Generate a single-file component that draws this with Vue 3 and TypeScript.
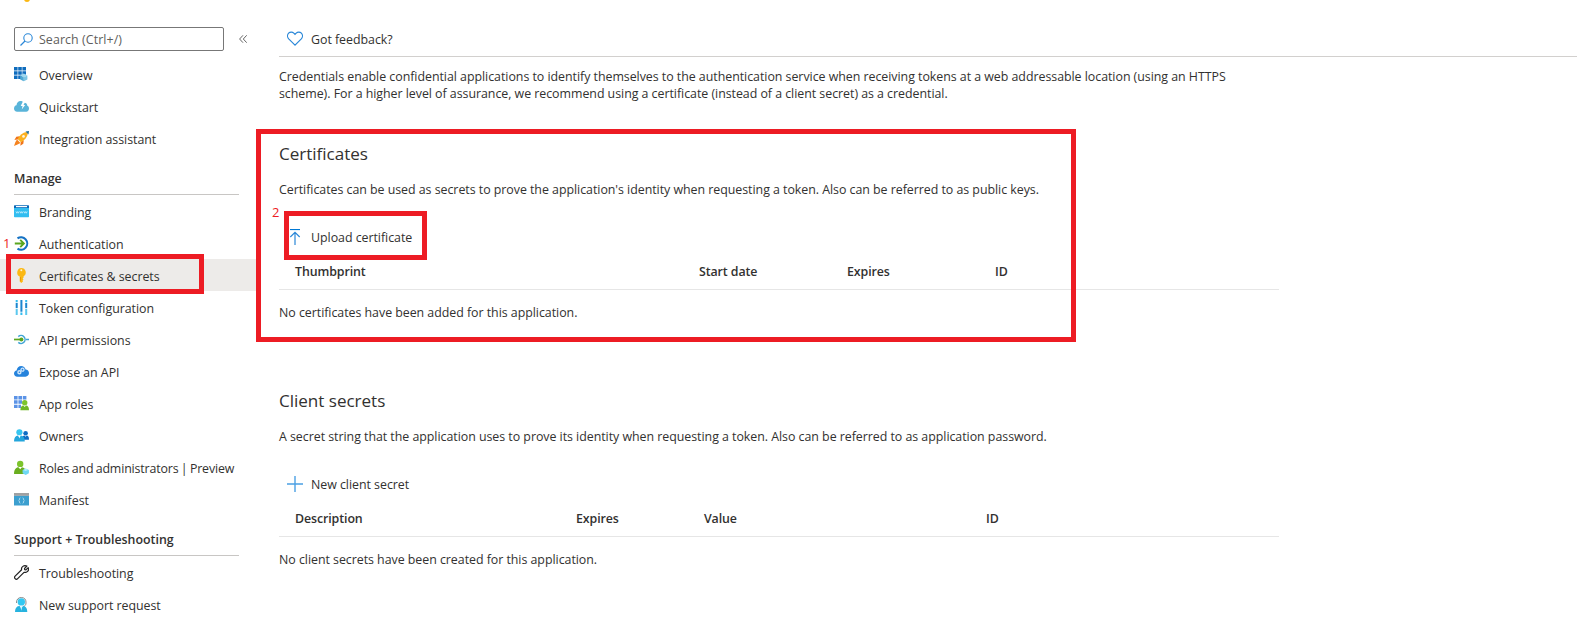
<script setup lang="ts">
import { ref } from 'vue';

interface MenuItem {
  label: string;
  icon: string;
}

interface MenuGroup {
  title?: string;
  items: MenuItem[];
}

const search = ref('');
const selected = ref('Certificates & secrets');

const menu: MenuGroup[] = [
  {
    items: [
      { label: 'Overview', icon: 'overview' },
      { label: 'Quickstart', icon: 'quickstart' },
      { label: 'Integration assistant', icon: 'rocket' },
    ],
  },
  {
    title: 'Manage',
    items: [
      { label: 'Branding', icon: 'branding' },
      { label: 'Authentication', icon: 'auth' },
      { label: 'Certificates & secrets', icon: 'key' },
      { label: 'Token configuration', icon: 'token' },
      { label: 'API permissions', icon: 'permissions' },
      { label: 'Expose an API', icon: 'cloud' },
      { label: 'App roles', icon: 'roles' },
      { label: 'Owners', icon: 'owners' },
      { label: 'Roles and administrators | Preview', icon: 'admin' },
      { label: 'Manifest', icon: 'manifest' },
    ],
  },
  {
    title: 'Support + Troubleshooting',
    items: [
      { label: 'Troubleshooting', icon: 'wrench' },
      { label: 'New support request', icon: 'support' },
    ],
  },
];

// all drawn on a 15x15 grid
const icons: Record<string, string> = {
  overview: `
    <path fill="#0f6cbd" d="M0 0h3.6v3.6H0zM4.2 0h3.6v3.6H4.2zM8.4 0H12v3.6H8.4zM0 4.2h3.6v3.6H0zM4.2 4.2h3.6v3.6H4.2zM8.4 4.2H12v3.6H8.4zM0 8.4h3.6V12H0zM4.2 8.4h3.6V12H4.2z"/>
    <path fill="#9fd8ef" d="M9.8 6.6l3.6 1.8-3.6 1.9-3.6-1.9z"/>
    <path fill="#4fa9d3" d="M6.2 8.4l3.6 1.9v4L6.2 12.4z"/>
    <path fill="#7cc5e4" d="M13.4 8.4l-3.6 1.9v4l3.6-1.9z"/>`,
  quickstart: `
    <path fill="#59b4d9" d="M3.2 12.8C1.2 12.8 0 11.500 0 9.600 0 7.800 1 6.400 2.500 6.200 2.700 3.800 4.300 2.100 6.500 2.100c1.500 0 2.500.6 3.200 1.700 2.100-.3 3.600 1 3.600 3 1.100.3 1.700 1.300 1.700 2.700 0 1.900-1.200 3.300-2.800 3.300z"/>
    <path fill="#fff" d="M8.900 2.600L6.700 7h1.900L7.700 10.600 11.200 5.900H9.500l1.500-2.700z"/>`,
  rocket: `
    <path fill="#f0741a" d="M5.800 5.200L2.300 5.800.4 9l4-.7zM9.800 9.200L9.300 12.700l-3 2 .5-3.900z"/>
    <path fill="#f5831f" d="M3 8.500l3.500 3.500-2.500 1.200L0 15l1.300-3.700z"/>
    <path fill="#fbb01f" d="M12.400 1.100l1.500 1.500c-.6 3.700-3.200 6.600-6.900 8.700L3.700 8C5.800 4.200 8.700 1.800 12.400 1.100z"/>
    <path fill="#1f6f9f" d="M15 0l-.5 3.500-3-3z"/>
    <circle cx="9.500" cy="5.400" r="1.300" fill="#fff6dd"/>`,
  branding: `
    <path fill="#32bdf0" d="M0 4h15v8.500a.7.7 0 0 1-.7.700H.700a.7.7 0 0 1-.7-.7z"/>
    <path fill="#0a68b8" d="M.6 1.200h13.800a.6.6 0 0 1 .6.600V4H0V1.800a.6.6 0 0 1 .6-.6z"/>
    <path fill="#fff" d="M2 2h11v1.200H2z"/>
    <path fill="none" stroke="#d5f3fd" stroke-width=".7" d="M2 7.400l.8 1.800.8-1.600.8 1.600.8-1.800M6 7.400l.8 1.800.8-1.600.8 1.600.8-1.800M10 7.400l.8 1.800.8-1.600.8 1.600.8-1.800"/>`,
  auth: `
    <path fill="none" stroke="#1572c4" stroke-width="2.100" d="M3.500 2.400A6.200 6.200 0 1 1 3.500 12.600"/>
    <path fill="none" stroke="#5aa61f" stroke-width="1.900" d="M.8 7.500h8.400M6.200 3.800l3.700 3.700-3.700 3.700"/>`,
  key: `
    <path fill="#fbb813" d="M7.300 0a4.500 4.500 0 0 1 2.200 8.400v1.300l-.9.900.9.900-.9 1 .4.900L7.300 15l-1.600-1.600V8.500A4.500 4.500 0 0 1 7.300 0z"/>
    <circle cx="7.300" cy="2.200" r="1" fill="#fff3cf"/>
    <path fill="#e79206" d="M6.200 9h.8v4.200l-.8-.7z"/>`,
  token: `
    <path fill="#32bdf0" d="M1.700 0h2v2.200h-2zM11.200 0h2v2.200h-2zM6.400 12.600h2V15h-2z"/>
    <path fill="#1b86cf" d="M1.700 3h2v5h-2zM11.200 3h2v5h-2zM6.400 0h2v11.700h-2z"/>
    <path fill="#5bc8ee" d="M1.700 8.700h2V15h-2zM11.200 8.700h2V15h-2z"/>`,
  permissions: `
    <path fill="none" stroke="#3fa4d4" stroke-width="1.500" d="M4.300 4.600a4 4 0 1 1 0 5.800M12 7.500h3"/>
    <path stroke="#5aa61f" stroke-width="1.700" d="M0 7.500h7"/>
    <circle cx="7.400" cy="7.500" r="2" fill="#5aa61f"/>`,
  cloud: `
    <path fill="#2583dc" d="M3.300 12.700C1.400 12.700 0 11.300 0 9.500c0-1.600 1.100-2.900 2.600-3.100C2.900 3.900 4.800 2 7.200 2c2.200 0 3.800 1.300 4.400 3.500 2 .2 3.400 1.600 3.400 3.600 0 2.100-1.500 3.600-3.500 3.600z"/>
    <circle cx="8.500" cy="5.700" r="1.500" fill="none" stroke="#cfe6fb" stroke-width="1.300"/>
    <circle cx="5.400" cy="8.300" r="1.500" fill="none" stroke="#cfe6fb" stroke-width="1.400"/>`,
  roles: `
    <path fill="#5b93e6" d="M0 0h3.600v3.400H0zM4.400 0H8v3.400H4.400zM8.800 0h3.600v3.400H8.800zM0 4.300h3.600v3.500H0zM4.400 4.300H8v3.500H4.400zM0 8.700h3.600v3.400H0zM4.400 8.700H7v3.400H4.400z"/>
    <circle cx="10.700" cy="6.700" r="2.700" fill="#7cc42c"/>
    <path fill="#6fb824" d="M6.400 14.200c0-3 1.200-4.600 3-4.600l1.300 1.500L12 9.600c1.800 0 3 1.600 3 4.600z"/>`,
  owners: `
    <circle cx="11.600" cy="5.200" r="2.300" fill="#0c6cc4"/>
    <path fill="#0c6cc4" d="M8 11.800c0-2.800 1-4.200 2.600-4.200l1 1.200 1-1.200c1.500 0 2.400 1.400 2.400 3.600 0 .4-.2.600-.6.600z"/>
    <circle cx="5.400" cy="4.300" r="3.100" fill="#37c5f0"/>
    <path fill="#24a6dc" d="M.6 13.600a.6.600 0 0 1-.6-.6c.2-3.400 1.600-5.500 3.900-5.500l1.500 2 1.500-2c2.300 0 3.600 2.100 3.900 5.500 0 .4-.2.600-.6.600z"/>
    <path fill="#fff" d="M4.400 7.500h2l-1 3z"/>`,
  admin: `
    <circle cx="6.200" cy="3.900" r="3.200" fill="#7cc42c"/>
    <path fill="#6aae20" d="M.6 14A.6.600 0 0 1 0 13.400C.3 9.600 1.900 7.300 4.500 7.300l1.700 2 1.700-2c2.500 0 3.900 2 4.200 6.100 0 .4-.2.600-.6.600z"/>
    <path fill="#6fd8f5" d="M11.700 8.400l3.200 1.500v3.400l-3.200 1.700-3.100-1.700V9.900z"/>
    <path fill="#b9eefb" d="M11.700 8.800l2.300 1.100-2.300 1.200-2.300-1.200z"/>`,
  manifest: `
    <path fill="#3c9fcf" d="M0 3.500h15v10H0z"/>
    <path fill="#a0a1a2" d="M0 1h15v2.800H0z"/>
    <path fill="none" stroke="#b5deF0" stroke-width=".9" d="M6.300 5.800c-1.300 0-.3 2.600-1.600 2.800 1.300.2.300 2.800 1.600 2.800M8.700 5.800c1.300 0 .3 2.600 1.600 2.800-1.300.2-.3 2.800-1.600 2.800"/>`,
  wrench: `
    <path fill="none" stroke="#222" stroke-width="1.200" stroke-linejoin="round" d="M12.900 1.100L10.500 3.500l.2 1.200 1.200.2 2.300-2.300c.7 2-.2 4-1.900 4.600-.8.300-1.600.3-2.300.100l-6.300 6.400a1.800 1.800 0 0 1-2.600-2.600l6.500-6.300C6.900 2.100 9.900-.4 12.900 1.100z"/>`,
  support: `
    <path fill="none" stroke="#8a8a8a" stroke-width="1" d="M2.500 6C2.300 2.600 4.200.5 7.300.5s5 2.100 4.700 5.500c-.1 2-.8 3-2.600 3.300"/>
    <circle cx="7.300" cy="4.900" r="3.700" fill="#32c8f2"/>
    <path fill="#27b3df" d="M1.600 15a.6.600 0 0 1-.6-.6c.3-3.300 1.800-5.300 4.600-5.300l1.700 2.200 1.700-2.200c2.700 0 4 2 4.300 5.300 0 .4-.2.600-.6.600z"/>
    <path fill="#d7f5fd" d="M6.300 9.200h2l-1 4.500z"/>`,
};
</script>

<template>
  <div class="portal">
    <aside class="sidebar">
      <span class="blade-key"></span>
      <div class="search-row">
        <label class="search">
          <svg width="13" height="13" viewBox="0 0 13 13">
            <circle cx="8" cy="5" r="4.200" fill="none" stroke="#2b88d8" stroke-width="1.100" />
            <path d="M5 8L.5 12.500" stroke="#2b88d8" stroke-width="1.200" />
          </svg>
          <input v-model="search" type="text" placeholder="Search (Ctrl+/)" />
        </label>
        <svg class="collapse" width="8" height="8" viewBox="0 0 8 8">
          <path d="M4 .3L.6 4 4 7.700M7.700.3L4.300 4l3.400 3.700" fill="none" stroke="#555" stroke-width=".9" />
        </svg>
      </div>

      <nav v-for="(group, i) in menu" :key="i" class="group">
        <h3 v-if="group.title" class="group-title">{{ group.title }}</h3>
        <a
          v-for="item in group.items"
          :key="item.label"
          class="item"
          :class="{ active: item.label === selected, long: item.label.length > 30 }"
          @click="selected = item.label"
        >
          <svg width="15" height="15" viewBox="0 0 15 15" v-html="icons[item.icon]"></svg>
          <span>{{ item.label }}</span>
        </a>
      </nav>

      <span class="step step-one">1</span>
      <div class="mark mark-menu"></div>
    </aside>

    <main class="content">
      <div class="toolbar">
        <svg width="16" height="17" viewBox="0 0 16 17">
          <path d="M8 14.200L1.700 7.800C.2 6.200.2 3.700 1.600 2.200c1.500-1.500 3.800-1.500 5.200-.1L8 3.300l1.200-1.200c1.400-1.400 3.700-1.400 5.200.1 1.400 1.500 1.400 4-.1 5.600z" fill="none" stroke="#2b88d8" stroke-width="1.200" />
        </svg>
        <span>Got feedback?</span>
      </div>

      <p class="intro">
        Credentials enable confidential applications to identify themselves to the authentication service when receiving tokens at a web addressable location (using an HTTPS<br>
        scheme). For a higher level of assurance, we recommend using a certificate (instead of a client secret) as a credential.
      </p>

      <section class="panel">
        <h2>Certificates</h2>
        <p class="about">Certificates can be used as secrets to prove the application's identity when requesting a token. Also can be referred to as public keys.</p>
        <div class="command">
          <svg width="16" height="16" viewBox="0 0 16 16">
            <path d="M3 .5h10" stroke="#0078d4" stroke-width="1.200" />
            <path d="M8 16V3.200M3.300 8L8 3.300 12.700 8" fill="none" stroke="#2b88d8" stroke-width="1.200" />
          </svg>
          <span>Upload certificate</span>
        </div>
        <div class="head head-certs">
          <span>Thumbprint</span>
          <span>Start date</span>
          <span>Expires</span>
          <span>ID</span>
        </div>
        <p class="empty">No certificates have been added for this application.</p>
        <span class="step step-two">2</span>
        <div class="mark mark-section"></div>
        <div class="mark mark-upload"></div>
      </section>

      <section class="panel">
        <h2>Client secrets</h2>
        <p class="about">A secret string that the application uses to prove its identity when requesting a token. Also can be referred to as application password.</p>
        <div class="command">
          <svg width="16" height="16" viewBox="0 0 16 16">
            <path d="M8 0v16M0 8h16" stroke="#4ba0e4" stroke-width="1.400" />
          </svg>
          <span>New client secret</span>
        </div>
        <div class="head head-secrets">
          <span>Description</span>
          <span>Expires</span>
          <span>Value</span>
          <span>ID</span>
        </div>
        <p class="empty">No client secrets have been created for this application.</p>
      </section>
    </main>
  </div>
</template>

<style>
body {
  margin: 0;
  background: #fff;
}
</style>

<style scoped>
.portal {
  display: flex;
  height: 640px;
  overflow: hidden;
  font-family: "Open Sans", "Noto Sans", sans-serif;
  font-size: 12.4px;
  letter-spacing: -0.035px;
  color: #323130;
}

h2,
h3,
p {
  margin: 0;
}

/* sidebar */
.sidebar {
  position: relative;
  width: 256px;
  flex: none;
}

.blade-key {
  position: absolute;
  top: -4px;
  left: 24px;
  width: 6px;
  height: 6px;
  border-radius: 50%;
  background: #fbb813;
}

.search-row {
  display: flex;
  align-items: center;
  gap: 15px;
  height: 24px;
  padding: 27px 0 7px 14px;
}

.search {
  display: flex;
  align-items: center;
  gap: 6px;
  box-sizing: border-box;
  width: 210px;
  height: 24px;
  padding-left: 5px;
  border: 1px solid #777;
  border-radius: 2px;
}

.search input {
  width: 160px;
  padding: 1px 0 0;
  border: 0;
  outline: 0;
  background: none;
  font: inherit;
  letter-spacing: 0.08px;
}

.search input::placeholder {
  color: #605e5c;
  opacity: 1;
}

.group-title {
  box-sizing: border-box;
  height: 41px;
  margin: 0 17px 0 14px;
  padding-top: 16px;
  border-bottom: 1px solid #c8c6c4;
  font-size: 12.4px;
  font-weight: 600;
  letter-spacing: 0;
  line-height: 18px;
}

.item {
  display: flex;
  align-items: center;
  gap: 10px;
  height: 32px;
  padding-left: 14px;
  cursor: pointer;
  white-space: nowrap;
}

.item svg {
  flex: none;
}

.item span {
  padding-top: 2px;
}

.item.active {
  background: #edebe9;
}

.item.long {
  letter-spacing: -0.15px;
  word-spacing: -0.7px;
}

/* content */
.content {
  flex: 1;
  min-width: 0;
  padding-left: 23px;
}

.toolbar {
  display: flex;
  align-items: center;
  gap: 8px;
  height: 34px;
  padding: 22px 0 0 8px;
  border-bottom: 1px solid #d2d0ce;
}

.intro {
  margin-top: 11px;
  line-height: 17px;
  white-space: nowrap;
}

.panel {
  position: relative;
  box-sizing: border-box;
  width: 1000px;
  height: 213px;
  margin-top: 27px;
  padding-top: 13px;
}

.panel + .panel {
  margin-top: 34px;
}

.panel h2 {
  font-size: 17.100px;
  font-weight: 400;
  line-height: 24px;
}

.about {
  margin-top: 15px;
  line-height: 18px;
  white-space: nowrap;
}

.command {
  display: flex;
  align-items: center;
  gap: 8px;
  height: 32px;
  margin-top: 22px;
  padding-left: 8px;
}

.head {
  display: grid;
  align-items: center;
  height: 36px;
  padding-left: 16px;
  border-bottom: 1px solid #e6e6e6;
  font-weight: 600;
  letter-spacing: -0.1px;
}

.head-certs {
  grid-template-columns: 404px 148px 148px 1fr;
}

.head-secrets {
  grid-template-columns: 281px 128px 282px 1fr;
}

.empty {
  padding-top: 14px;
  line-height: 18px;
}

/* red callouts drawn over the page */
.mark {
  position: absolute;
  box-sizing: border-box;
  border: 5px solid #ed1c24;
  pointer-events: none;
}

.mark-menu {
  top: 254px;
  left: 6px;
  width: 198px;
  height: 40px;
}

.mark-section {
  top: 0;
  left: -23px;
  width: 820px;
  height: 213px;
}

.mark-upload {
  top: 82px;
  left: 5px;
  width: 143px;
  height: 49px;
}

.step {
  position: absolute;
  color: #ed1c24;
  font-size: 13px;
  line-height: 16px;
}

.step-one {
  top: 235px;
  left: 3px;
}

.step-two {
  top: 75px;
  left: -7px;
}
</style>
